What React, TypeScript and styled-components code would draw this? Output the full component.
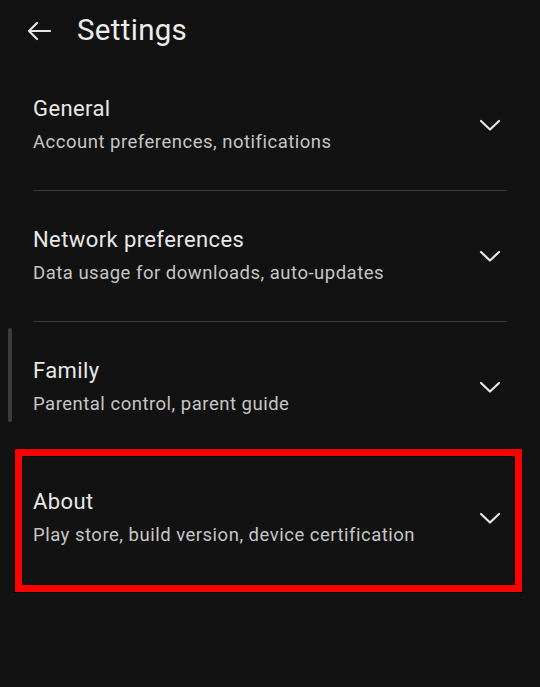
import React, { ReactElement } from 'react';
import styled, { createGlobalStyle } from 'styled-components';

interface ISettingItem {
  title: string;
  subtitle: string;
  highlighted?: boolean;
}

const items: ISettingItem[] = [
  { title: 'General', subtitle: 'Account preferences, notifications' },
  { title: 'Network preferences', subtitle: 'Data usage for downloads, auto-updates' },
  { title: 'Family', subtitle: 'Parental control, parent guide' },
  { title: 'About', subtitle: 'Play store, build version, device certification', highlighted: true },
];

const BackArrow = (): ReactElement => (
  <svg width="26" height="22" viewBox="0 0 26 22" fill="none">
    <path
      d="M24 11H3M11 3L3 11L11 19"
      stroke="#e6e6e6"
      strokeWidth="2.2"
      strokeLinecap="round"
      strokeLinejoin="round"
    />
  </svg>
);

const Chevron = (): ReactElement => (
  <svg width="24" height="14" viewBox="0 0 24 14" fill="none">
    <path
      d="M3 3L12 11.5L21 3"
      stroke="#e6e6e6"
      strokeWidth="2.2"
      strokeLinecap="round"
      strokeLinejoin="round"
    />
  </svg>
);

const SettingRow: React.FC<ISettingItem & { last: boolean }> = ({
  title,
  subtitle,
  highlighted,
  last,
}): ReactElement => (
  <SRow $last={last}>
    <SRowText>
      <STitle>{title}</STitle>
      <SSubtitle>{subtitle}</SSubtitle>
    </SRowText>
    <SChevronWrap>
      <Chevron />
    </SChevronWrap>
    {highlighted && <SHighlight />}
  </SRow>
);

const App = (): ReactElement => (
  <>
    <GlobalStyle />
    <SScreen>
      <SHeader>
        <SBackButton>
          <BackArrow />
        </SBackButton>
        <SHeaderTitle>Settings</SHeaderTitle>
      </SHeader>
      <SList>
        {items.map((item, i) => (
          <SettingRow key={item.title} {...item} last={i >= items.length - 2} />
        ))}
        <SScrollbar />
      </SList>
    </SScreen>
  </>
);

export default App;

const GlobalStyle = createGlobalStyle`
  html, body {
    margin: 0;
    padding: 0;
    background: #121212;
  }
  body {
    font-family: Roboto, "Noto Sans", sans-serif;
  }
`;

const SScreen = styled.div`
  width: 540px;
  height: 687px;
  background: #121212;
  overflow: hidden;
`;

const SHeader = styled.div`
  display: flex;
  align-items: center;
  height: 60px;
  padding-left: 26px;
`;

const SBackButton = styled.div`
  display: flex;
  width: 26px;
  height: 22px;
  margin-top: 1px;
`;

const SHeaderTitle = styled.h1`
  margin: 0 0 0 25px;
  font-size: 29.5px;
  font-weight: 400;
  color: #ececec;
  letter-spacing: 0.3px;
`;

const SList = styled.div`
  position: relative;
  padding: 0 33px;
`;

const SRow = styled.div<{ $last: boolean }>`
  position: relative;
  display: flex;
  align-items: center;
  height: 131px;
  box-sizing: border-box;
  border-bottom: 1px solid ${({ $last }) => ($last ? 'transparent' : '#3a3a3a')};
`;

const SRowText = styled.div`
  flex: 1;
  display: flex;
  flex-direction: column;
  gap: 8px;
  margin-top: -1px;
`;

const STitle = styled.div`
  font-size: 22px;
  color: #e8e8e8;
  line-height: 26px;
  letter-spacing: 0.4px;
`;

const SSubtitle = styled.div`
  font-size: 18.5px;
  color: #c6c6c6;
  line-height: 24px;
  letter-spacing: 0.5px;
`;

const SChevronWrap = styled.div`
  display: flex;
  margin-right: 5px;
`;

const SHighlight = styled.div`
  position: absolute;
  left: -18px;
  right: -15px;
  top: -4px;
  bottom: -9px;
  border: 7px solid #ff0000;
  box-shadow: 0 0 0 1px #000, inset 0 0 0 1px #000;
  pointer-events: none;
`;

const SScrollbar = styled.div`
  position: absolute;
  left: 8px;
  top: 268px;
  width: 4px;
  height: 94px;
  border-radius: 2px;
  background: #3c3c3c;
`;
